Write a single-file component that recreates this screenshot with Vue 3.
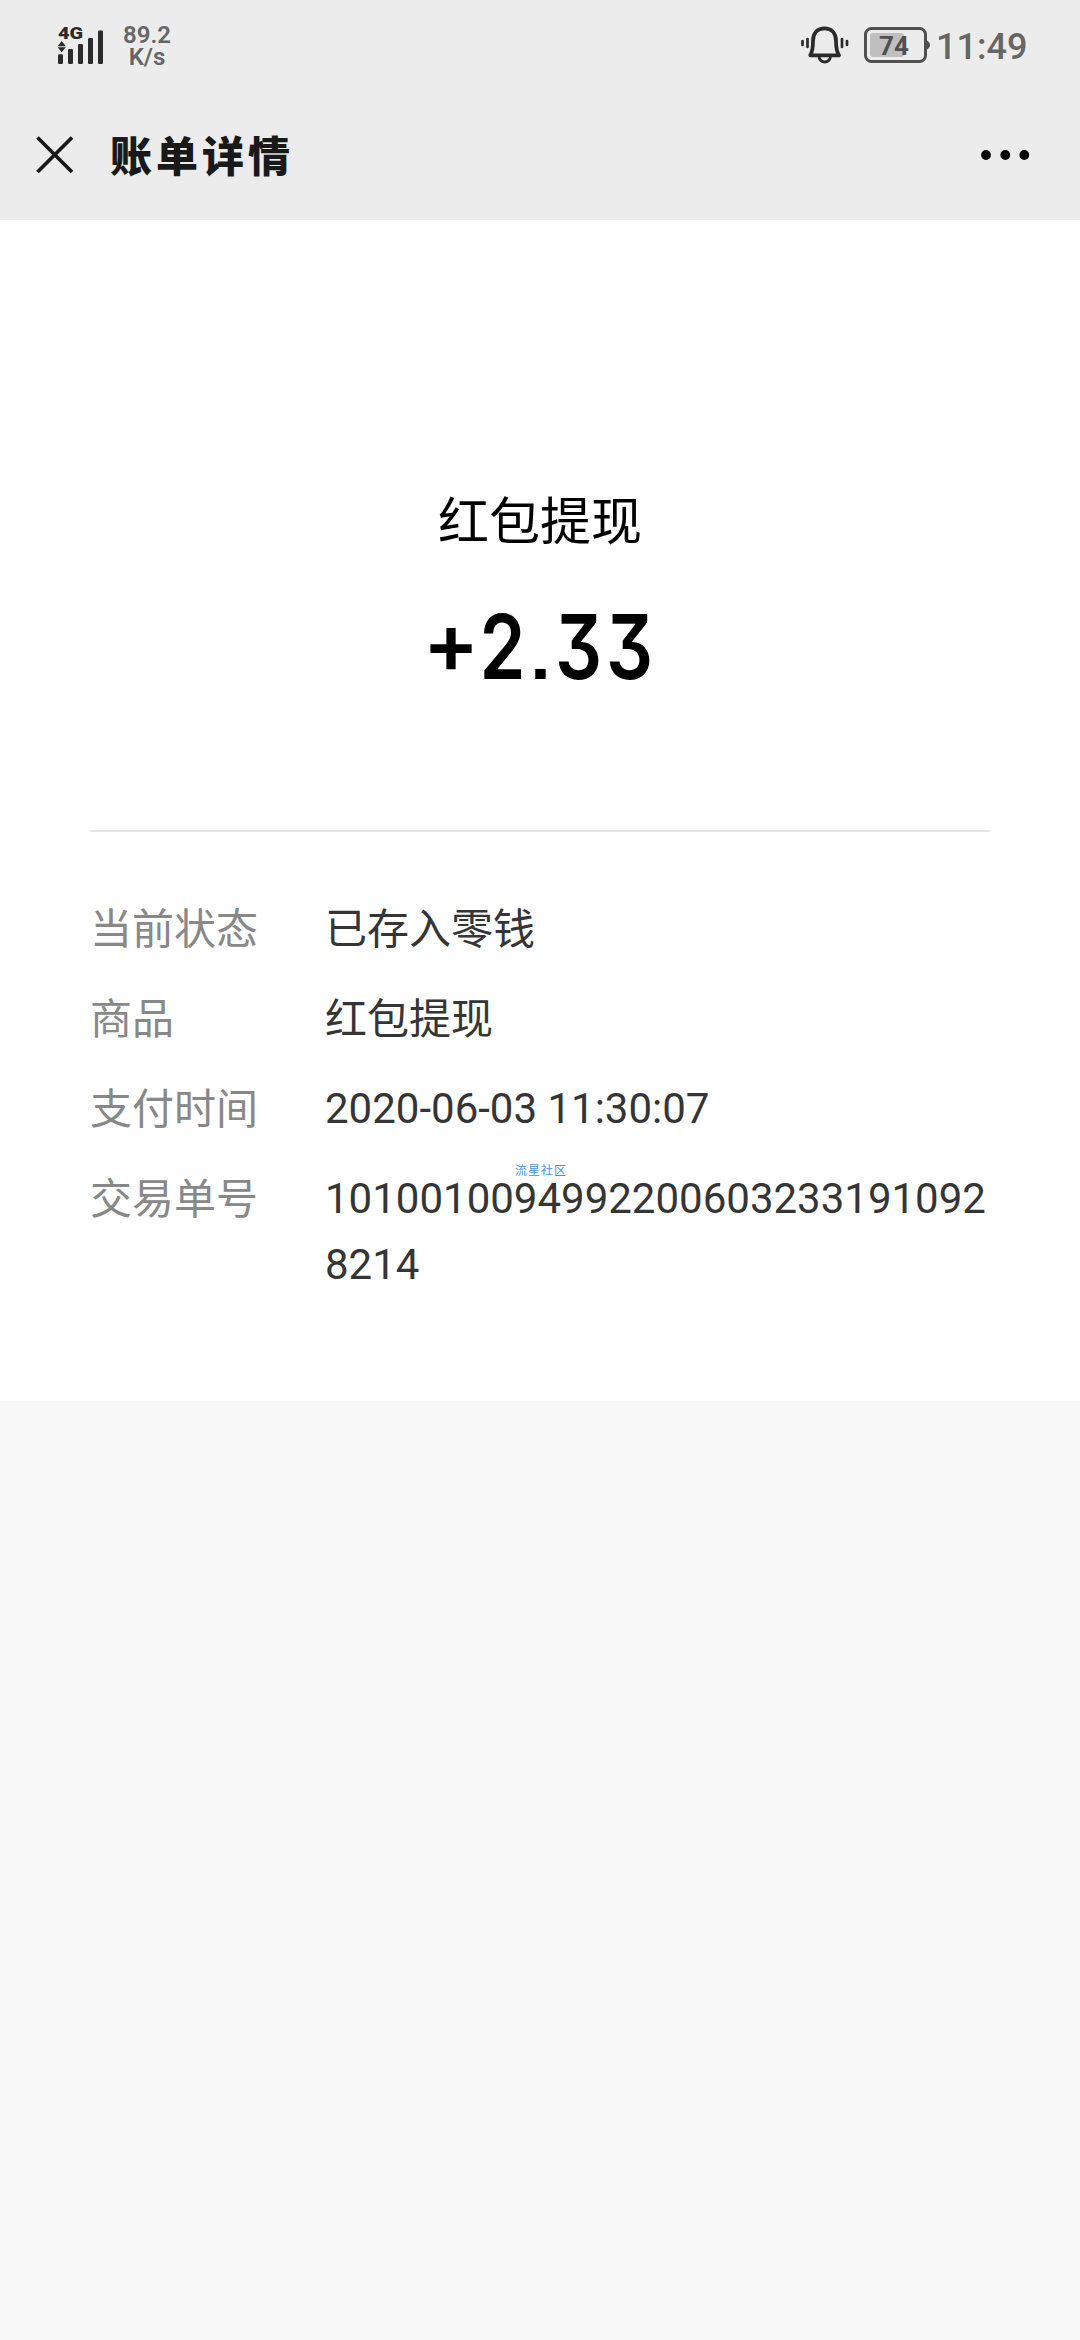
<script setup>
const details = [
  { label: '当前状态', value: '已存入零钱', han: true },
  { label: '商品', value: '红包提现', han: true },
  { label: '支付时间', value: '2020-06-03 11:30:07' },
  { label: '交易单号', value: '1010010094992200603233191092 8214' },
]
</script>

<template>
  <main class="screen">
    <div class="status-bar">
      <svg class="signal" width="46" height="48" viewBox="0 0 46 48">
        <text x="0" y="15" class="network" textLength="25" lengthAdjust="spacingAndGlyphs">4G</text>
        <path d="M3.7 17 7.8 22.2H-.3ZM3.7 28.2 7.8 23.2H-.3Z" />
        <rect x="0" y="30.3" width="5" height="9.7" rx="1.3" />
        <rect x="10" y="25" width="5" height="15" rx="1.3" />
        <rect x="20" y="20" width="5" height="20" rx="1.3" />
        <rect x="30" y="14" width="5" height="26" rx="1.3" />
        <rect x="40" y="6.5" width="5" height="33.5" rx="1.3" />
      </svg>
      <div class="speed"><span>89.2</span><span>K/s</span></div>
      <svg class="bell" width="48" height="42" viewBox="0 0 48 42" fill="none" stroke="#2b2b2b">
        <path d="M9.3 31.3C11.8 27 12 23 12 17C12 8.500 16.800 4.300 23.500 4.300S35 8.500 35 17C35 23 35.200 27 38 31.300Z" stroke-width="3.800" stroke-linejoin="round" />
        <path d="M18 33C19.500 39.500 28 39.500 29.500 33" stroke-width="3" />
        <path d="M1.500 17v4M6.500 15v8M41 15v8M46 17v4" stroke-width="2.700" stroke-linecap="round" />
      </svg>
      <svg class="battery" width="66" height="38" viewBox="0 0 66 38">
        <rect x="1.500" y="1.500" width="60" height="33" rx="6" fill="none" stroke="#505050" stroke-width="3" />
        <path d="M62 13Q66 15 66 18T62 23Z" fill="#505050" />
        <rect x="6" y="6" width="34" height="24" rx="3" fill="#bfbfbf" />
        <text x="15" y="28" class="charge">74</text>
      </svg>
      <time class="clock">11:49</time>
    </div>

    <header class="nav">
      <svg class="close" width="38" height="38" viewBox="0 0 38 38">
        <path d="M1.500 1.500 36 36M36 1.500 1.500 36" stroke="#191919" stroke-width="3.700" />
      </svg>
      <h1>账单详情</h1>
      <svg class="more" width="50" height="10" viewBox="0 0 50 10">
        <circle cx="5" cy="5" r="4.900" /><circle cx="24.300" cy="5" r="4.900" /><circle cx="43.300" cy="5" r="4.900" />
      </svg>
    </header>

    <section class="bill">
      <h2>红包提现</h2>
      <div class="amount"><span class="plus">+</span><span class="digit">2</span><span class="dot">.</span><span class="digit">3</span><span class="digit">3</span></div>
      <dl>
        <div v-for="item in details" :key="item.label" class="row">
          <dt>{{ item.label }}</dt>
          <dd :class="{ han: item.han }">{{ item.value }}</dd>
        </div>
      </dl>
      <span class="watermark">流星社区</span>
    </section>
  </main>
</template>

<style>
body {
  margin: 0;
  background: #f8f8f8;
}
</style>

<style scoped>
.screen {
  width: 1080px;
  height: 2340px;
  overflow: hidden;
  background: #f8f8f8;
  font-family: Roboto, "Noto Sans CJK SC", sans-serif;
}
.status-bar {
  display: flex;
  align-items: flex-start;
  height: 90px;
  padding: 0 54px 0 58px;
  box-sizing: border-box;
  background: #ececec;
}
.signal {
  margin-top: 24px;
  fill: #2b2b2b;
  overflow: visible;
}
.network {
  font: 900 17px Roboto, sans-serif;
}
.speed {
  display: flex;
  flex-direction: column;
  align-items: center;
  width: 48px;
  margin: 24px 0 0 19px;
  color: #666;
  font-size: 24px;
  font-weight: 600;
  line-height: 22px;
}
.bell {
  margin: 24px 0 0 auto;
}
.battery {
  margin: 27px 0 0 15px;
}
.charge {
  font: 700 26px Roboto, sans-serif;
  fill: #505050;
}
.clock {
  width: 90px;
  margin: 26px 0 0 6px;
  color: #666;
  font-size: 36px;
  font-weight: 500;
  line-height: 42px;
}
.nav {
  display: flex;
  align-items: center;
  height: 130px;
  padding: 0 49px 0 36px;
  box-sizing: border-box;
  background: #ececec;
}
h1 {
  margin: 0 auto 3px 36px;
  color: #191919;
  font-family: "Noto Sans CJK SC", sans-serif;
  font-size: 42px;
  font-weight: 900;
  line-height: 60px;
  letter-spacing: 4px;
}
.bill {
  position: relative;
  height: 1181px;
  padding: 269px 90px 0;
  box-sizing: border-box;
  background: #fff;
}
h2 {
  margin: 0;
  font-size: 51px;
  font-weight: 400;
  line-height: 68px;
  text-align: center;
}
.amount {
  display: flex;
  align-items: baseline;
  justify-content: center;
  height: 110px;
  margin-top: 35px;
  font-family: Inter, Lato, sans-serif;
  font-size: 90px;
  font-weight: 600;
  line-height: 110px;
  font-feature-settings: "cv09" 1, "ss07" 1;
}
.amount span {
  display: flex;
  justify-content: center;
}
.plus {
  width: 52px;
  font-size: 84px;
  transform: translateY(-6px);
}
.digit {
  width: 51px;
  transform: scaleX(0.82);
}
.dot {
  width: 25px;
  font-size: 72px;
}
dl {
  display: flex;
  flex-direction: column;
  gap: 24px;
  margin: 128px 0 0;
  padding-top: 64px;
  border-top: 2px solid #e5e5e5;
}
.row {
  display: flex;
  font-size: 42px;
  line-height: 66px;
}
dt {
  width: 235px;
  flex: none;
  color: #888;
}
dd {
  margin: 0;
  color: #353535;
}
dt,
.han {
  transform: translateY(1px);
}
.watermark {
  position: absolute;
  top: 943px;
  left: 515px;
  color: #4a90e2;
  font-size: 12px;
  line-height: 16px;
  letter-spacing: 1px;
}
</style>
